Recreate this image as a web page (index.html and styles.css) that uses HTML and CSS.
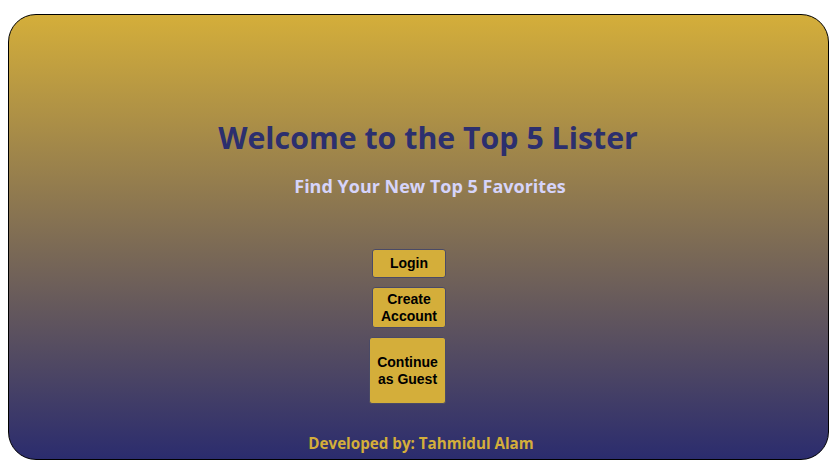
FILE: index.html
```html
<!DOCTYPE html>
<html>
<head>
<meta charset="utf-8">
<link rel="stylesheet" href="styles.css">
</head>
<body>
<div class="screen">
  <div class="hero">
    <h1 class="title">Welcome to the Top 5 Lister</h1>
    <h2 class="subtitle">Find Your New Top 5 Favorites</h2>
  </div>
  <div class="actions">
    <button class="btn btn-login">Login</button>
    <button class="btn btn-create">Create<br>Account</button>
    <button class="btn btn-guest">Continue<br>as Guest</button>
  </div>
  <div class="footer">Developed by: Tahmidul Alam</div>
</div>
</body>
</html>
```
FILE: styles.css
```css
html, body { margin: 0; padding: 0; background: #fff; }
body { padding: 14px 8px 0 8px; }
.screen {
  box-sizing: border-box;
  height: 446px;
  border: 1px solid #000;
  border-radius: 28px;
  background: linear-gradient(to bottom, #d4ae3a 0%, #2b2c6e 100%);
  display: flex;
  flex-direction: column;
  align-items: center;
}
.hero {
  margin-top: 101px;
  display: flex;
  flex-direction: column;
  align-items: center;
}
.title {
  margin: 0 0 0 19px;
  font-family: "Open Sans", sans-serif;
  font-weight: 700;
  font-size: 30.3px;
  line-height: 44px;
  color: #2c2f6e;
}
.subtitle {
  margin: 14px 0 0 23px;
  font-family: "Open Sans", sans-serif;
  font-weight: 700;
  font-size: 18px;
  line-height: 24px;
  color: #d6d4fa;
}
.actions {
  margin: 51px 0 0 -19px;
  display: flex;
  flex-direction: column;
  align-items: center;
  gap: 9px;
}
.btn {
  box-sizing: border-box;
  font-family: "Liberation Sans", Arial, sans-serif;
  font-weight: 700;
  font-size: 14px;
  line-height: 17px;
  color: #000;
  background: #d4ae3a;
  border: 1px solid #4a4a66;
  border-radius: 3px;
  padding: 0;
}
.btn-login { width: 74px; height: 29px; }
.btn-create { width: 74px; height: 41px; }
.btn-guest { width: 77px; height: 67px; margin-left: -3px; }
.footer {
  margin: auto 0 6px 5px;
  font-family: "Open Sans", sans-serif;
  font-weight: 700;
  font-size: 15.2px;
  line-height: 20px;
  color: #d4ae3a;
}
```
